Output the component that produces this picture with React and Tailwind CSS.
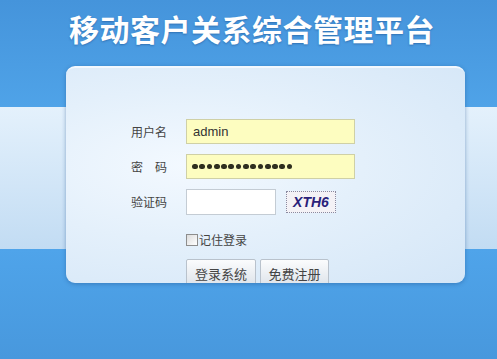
import React from "react";

const cjk = { fontFamily: '"Noto Sans CJK SC", "Liberation Sans", sans-serif' };

export default function App() {
  return (
    <div
      className="w-full h-[359px] overflow-hidden flex flex-col bg-[linear-gradient(to_bottom,#4594db_0px,#4fa3e8_107px,#e4f1fc_107px,#c2dcf3_249px,#4fa4ea_249px,#4898dd_359px)]"
      style={cjk}
    >
      <h1 className="mt-[12px] ml-[69px] h-[32px] text-[30px] leading-[32px] font-bold text-white tracking-[0.5px] [text-shadow:0_1px_2px_rgba(0,40,100,0.35)]">
        移动客户关系综合管理平台
      </h1>
      <div className="mt-[22px] ml-[66px] w-[399px] h-[217px] shrink-0 rounded-[9px] border-t-2 border-t-[#f2f8fe] bg-[radial-gradient(ellipse_at_30%_45%,#f3f9ff_0%,#e4f0fb_45%,#d4e6f7_100%)] shadow-[0_1px_4px_rgba(30,80,140,0.45)] overflow-hidden">
        <div className="pl-[65px] pt-[51px] grid grid-cols-[55px_auto] items-center gap-y-[10px] text-[12px] text-[#444]">
          <span className="leading-none">用户名</span>
          <div className="w-[169px] h-[25px] bg-[#fdfdc0] border border-[#cfd0a6] flex items-center pl-[6px] text-[13px] text-[#333]" style={{ fontFamily: '"Liberation Sans", sans-serif' }}>
            admin
          </div>
          <span className="leading-none flex justify-between w-[36px]"><span>密</span><span>码</span></span>
          <div className="w-[169px] h-[25px] bg-[#fdfdc0] border border-[#cfd0a6] flex items-center pl-[5px] gap-[1.6px]">
            {Array.from({ length: 14 }).map((_, i) => (
              <span key={i} className="w-[5.7px] h-[5.7px] rounded-full bg-[#2f2f1f]" />
            ))}
          </div>
          <span className="leading-none">验证码</span>
          <div className="flex items-center">
            <div className="w-[90px] h-[26px] bg-white border border-[#c4ccd4]" />
            <div className="ml-[10px] w-[50px] h-[22px] bg-[#f4f2f6] border border-dotted border-[#8a8aa0] flex items-center justify-center text-[14px] font-bold italic text-[#2a1f7a]" style={{ fontFamily: '"Liberation Sans", sans-serif' }}>
              XTH6
            </div>
          </div>
          <span />
          <div className="flex items-center mt-[8px] h-[14px]">
            <span className="w-[12px] h-[12px] border border-[#8d8d8d] bg-[linear-gradient(135deg,#dcdcdc,#ffffff)] mr-[1px]" />
            <span className="leading-none text-[12px] text-[#444]">记住登录</span>
          </div>
          <span />
          <div className="flex gap-[4px] mt-[2px]">
            <button className="w-[70px] h-[28px] rounded-[2px] border border-[#b9c2cc] bg-[linear-gradient(to_bottom,#fbfcfd,#dde3ea)] text-[13px] text-[#444] leading-none">
              登录系统
            </button>
            <button className="w-[69px] h-[28px] rounded-[2px] border border-[#b9c2cc] bg-[linear-gradient(to_bottom,#fbfcfd,#dde3ea)] text-[13px] text-[#444] leading-none">
              免费注册
            </button>
          </div>
        </div>
      </div>
    </div>
  );
}
